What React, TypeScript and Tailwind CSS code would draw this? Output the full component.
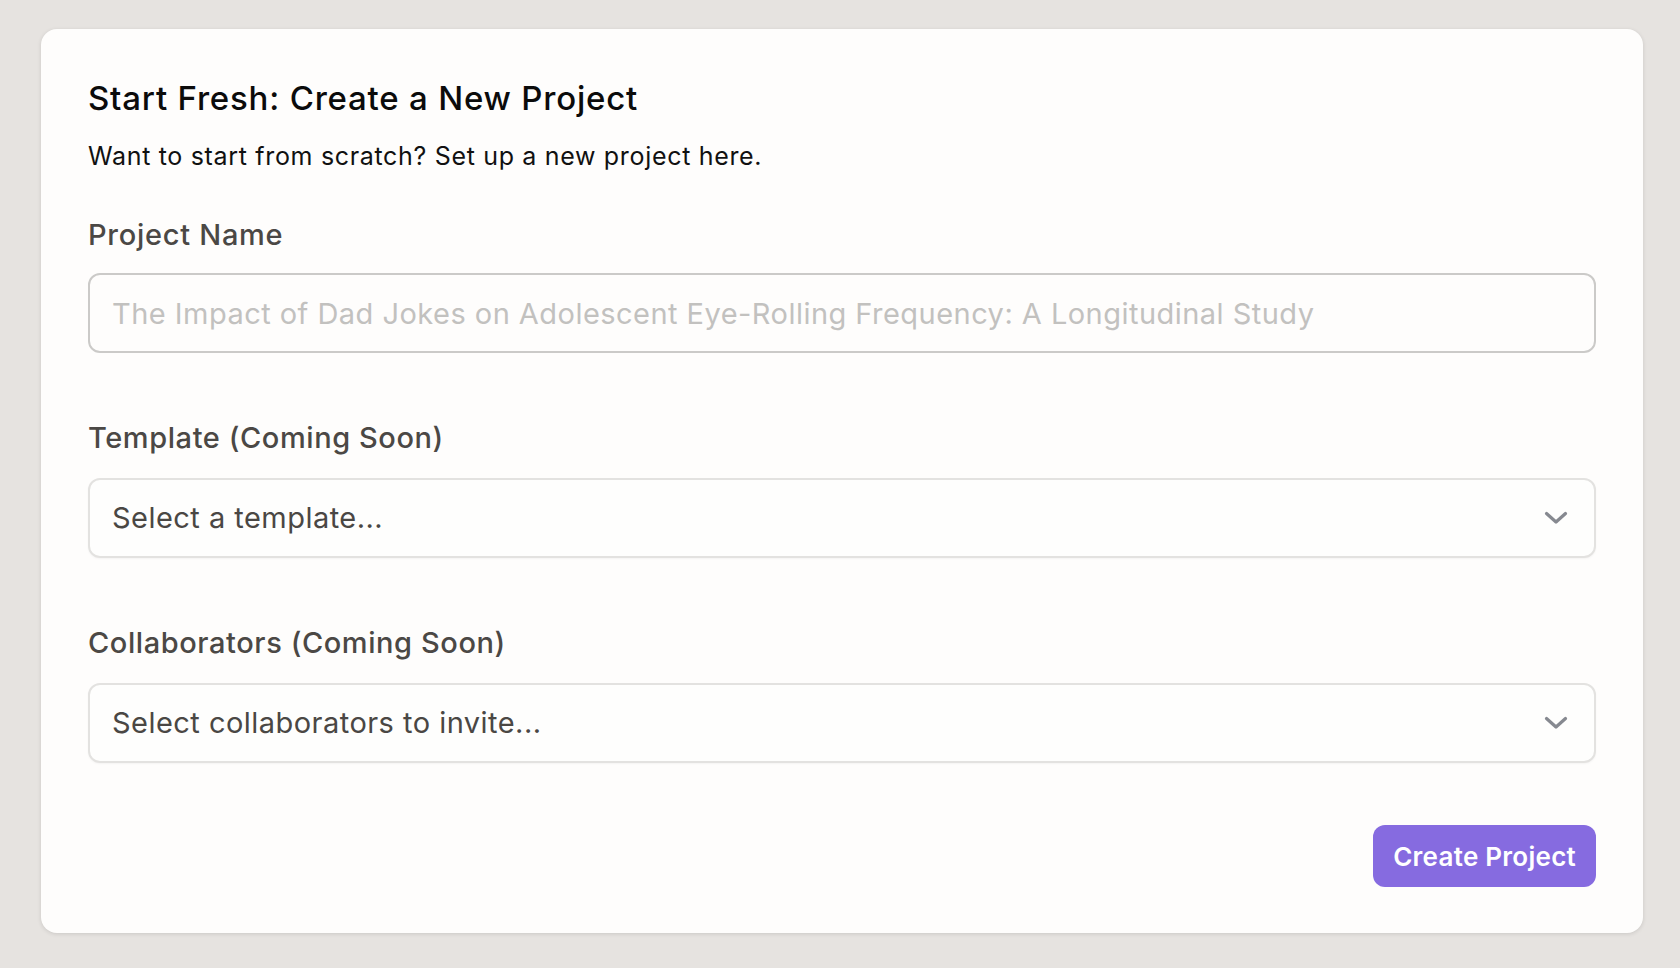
import React from "react";

function Chevron() {
  return (
    <svg width="24" height="14" viewBox="0 0 24 14" fill="none" className="text-[#868990]">
      <path d="M2.5 2.5 12 11 21.5 2.5" stroke="currentColor" strokeWidth="3.2" strokeLinecap="round" strokeLinejoin="round" />
    </svg>
  );
}

function SelectBox({ label }: { label: string }) {
  return (
    <div className="flex h-20 w-full items-center justify-between rounded-xl border-2 border-[#e3e2e0] bg-[#fefefd] pl-[22px] pr-[26px] shadow-[0_1px_2px_rgba(0,0,0,0.04)]">
      <span className="text-[29px] tracking-[0.016em] text-[#4a4744]">{label}</span>
      <Chevron />
    </div>
  );
}

export default function App() {
  return (
    <div
      className="min-h-screen bg-[#e6e3e0] pl-[41px] pr-[37px] pt-[29px] pb-9"
      style={{ fontFamily: "Inter, 'Liberation Sans', sans-serif" }}
    >
      <div className="rounded-2xl bg-[#fefdfc] px-[47px] pt-[49px] pb-[46px] shadow-[0_1px_4px_rgba(0,0,0,0.12)]">
        <h1 className="text-[33px] leading-10 font-medium tracking-[0.024em] text-[#0b0b0b]">
          Start Fresh: Create a New Project
        </h1>
        <p className="mt-[22px] text-[25px] leading-8 tracking-[0.027em] text-[#111111]">
          Want to start from scratch? Set up a new project here.
        </p>

        <div className="mt-[45px] flex flex-col gap-[67px]">
          <div>
            <label className="block text-[29px] leading-9 font-medium tracking-[0.025em] text-[#4b4845]">
              Project Name
            </label>
            <input
              type="text"
              placeholder="The Impact of Dad Jokes on Adolescent Eye-Rolling Frequency: A Longitudinal Study"
              className="mt-5 h-20 w-full rounded-xl border-2 border-[#cbcac8] bg-transparent px-[22px] text-[29px] tracking-[0.016em] text-[#333] outline-none placeholder:text-[#c2c1bf]"
            />
          </div>

          <div>
            <label className="block text-[29px] leading-9 font-medium tracking-[0.02em] text-[#4b4845]">
              Template (Coming Soon)
            </label>
            <div className="mt-[22px]">
              <SelectBox label="Select a template..." />
            </div>
          </div>

          <div>
            <label className="block text-[29px] leading-9 font-medium tracking-[0.02em] text-[#4b4845]">
              Collaborators (Coming Soon)
            </label>
            <div className="mt-[22px]">
              <SelectBox label="Select collaborators to invite..." />
            </div>
          </div>
        </div>

        <div className="mt-[62px] flex justify-end">
          <button className="h-[62px] rounded-xl bg-[#866be0] px-5 text-[26px] font-semibold tracking-[0.01em] text-white">
            Create Project
          </button>
        </div>
      </div>
    </div>
  );
}
